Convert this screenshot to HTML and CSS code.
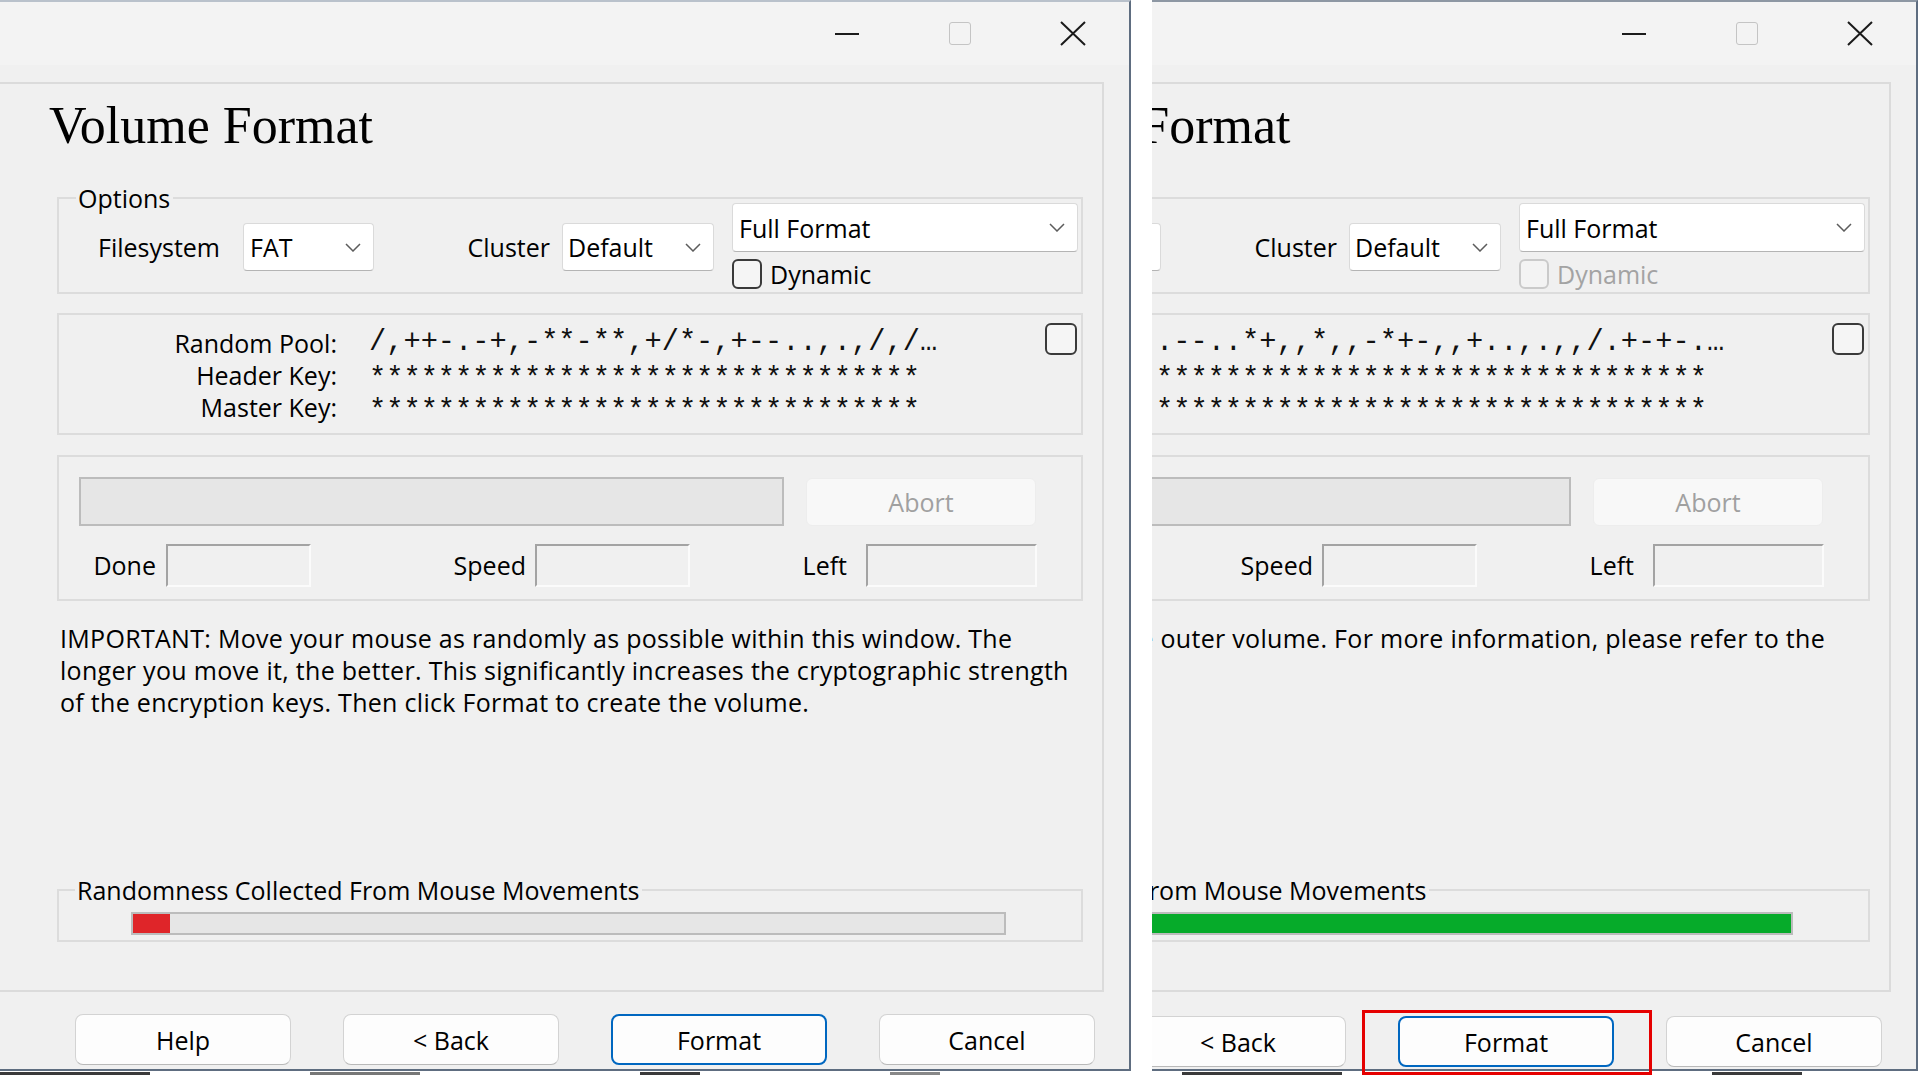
FILE: index.html
```html
<!DOCTYPE html>
<html lang="en">
<head>
<meta charset="utf-8">
<title>Volume Format</title>
<link rel="stylesheet" href="styles.css">
</head>
<body>
<div class="screen">
  <div class="viewport vp-left">
    <div class="window">
      <div class="titlebar">
        <div class="cap-btn"><span class="min-glyph"></span></div>
        <div class="cap-btn"><span class="max-glyph"></span></div>
        <div class="cap-btn"><svg class="close-glyph" width="26" height="25" viewBox="0 0 26 25"><path d="M1 1L25 24M25 1L1 24" stroke="#1a1a1a" stroke-width="2" fill="none"/></svg></div>
      </div>
      <div class="frame">
        <h1 class="page-title">Volume Format</h1>
        <fieldset class="group options">
          <legend>Options</legend>
          <div class="options-row">
            <span class="lbl lbl-fs">Filesystem</span>
            <div class="combo combo-fs"><span>FAT</span><svg class="chev" width="16" height="9" viewBox="0 0 16 9"><polyline points="1,1 8,8 15,1" fill="none" stroke="#5c5c5c" stroke-width="1.5"/></svg></div>
            <span class="lbl lbl-cluster">Cluster</span>
            <div class="combo combo-cluster"><span>Default</span><svg class="chev" width="16" height="9" viewBox="0 0 16 9"><polyline points="1,1 8,8 15,1" fill="none" stroke="#5c5c5c" stroke-width="1.5"/></svg></div>
            <div class="format-col">
              <div class="combo combo-format"><span>Full Format</span><svg class="chev" width="16" height="9" viewBox="0 0 16 9"><polyline points="1,1 8,8 15,1" fill="none" stroke="#5c5c5c" stroke-width="1.5"/></svg></div>
              <div class="check"><span class="check-box"></span><span>Dynamic</span></div>
            </div>
          </div>
        </fieldset>
        <div class="group keys">
          <div class="keys-grid">
            <span class="key-lbl">Random Pool:</span><span class="key-val">/,++-.-+,-**-**,+/*-,+--..,.,/,/…</span>
            <span class="key-lbl">Header Key:</span><span class="key-val key-stars">********************************</span>
            <span class="key-lbl">Master Key:</span><span class="key-val key-stars">********************************</span>
          </div>
          <span class="check-box keys-box"></span>
        </div>
        <div class="group progress">
          <div class="prog-row">
            <div class="prog-bar"></div>
            <div class="abort">Abort</div>
          </div>
          <div class="stats-row">
            <span class="stat-lbl lbl-done">Done</span><span class="stat-box box-done"></span>
            <span class="stat-lbl lbl-speed">Speed</span><span class="stat-box box-speed"></span>
            <span class="stat-lbl lbl-left">Left</span><span class="stat-box box-left"></span>
          </div>
        </div>
        <p class="help">IMPORTANT: Move your mouse as randomly as possible within this window. The<br>longer you move it, the better. This significantly increases the cryptographic strength<br>of the encryption keys. Then click Format to create the volume.</p>
        <fieldset class="group randomness">
          <legend>Randomness Collected From Mouse Movements</legend>
          <div class="rand-bar"><div class="rand-fill red" style="width:4.2%"></div></div>
        </fieldset>
      </div>
      <div class="buttons">
        <div class="btn">Help</div>
        <div class="btn">&lt; Back</div>
        <div class="btn btn-default">Format</div>
        <div class="btn">Cancel</div>
      </div>
    </div>
    <div class="desk">
      <span class="frag f1"></span><span class="frag f2"></span><span class="frag f3"></span><span class="frag f4"></span>
    </div>
  </div>

  <div class="viewport vp-gap"></div>

  <div class="viewport vp-right">
    <div class="window window-shift">
      <div class="titlebar">
        <div class="cap-btn"><span class="min-glyph"></span></div>
        <div class="cap-btn"><span class="max-glyph"></span></div>
        <div class="cap-btn"><svg class="close-glyph" width="26" height="25" viewBox="0 0 26 25"><path d="M1 1L25 24M25 1L1 24" stroke="#1a1a1a" stroke-width="2" fill="none"/></svg></div>
      </div>
      <div class="frame">
        <h1 class="page-title">Outer Volume Format</h1>
        <fieldset class="group options">
          <legend>Options</legend>
          <div class="options-row">
            <span class="lbl lbl-fs">Filesystem</span>
            <div class="combo combo-fs"><span>FAT</span><svg class="chev" width="16" height="9" viewBox="0 0 16 9"><polyline points="1,1 8,8 15,1" fill="none" stroke="#5c5c5c" stroke-width="1.5"/></svg></div>
            <span class="lbl lbl-cluster">Cluster</span>
            <div class="combo combo-cluster"><span>Default</span><svg class="chev" width="16" height="9" viewBox="0 0 16 9"><polyline points="1,1 8,8 15,1" fill="none" stroke="#5c5c5c" stroke-width="1.5"/></svg></div>
            <div class="format-col">
              <div class="combo combo-format"><span>Full Format</span><svg class="chev" width="16" height="9" viewBox="0 0 16 9"><polyline points="1,1 8,8 15,1" fill="none" stroke="#5c5c5c" stroke-width="1.5"/></svg></div>
              <div class="check check-disabled"><span class="check-box"></span><span>Dynamic</span></div>
            </div>
          </div>
        </fieldset>
        <div class="group keys">
          <div class="keys-grid">
            <span class="key-lbl">Random Pool:</span><span class="key-val">.--..*+,,*,,-*+-,,+..,.,,/.+-+-.…</span>
            <span class="key-lbl">Header Key:</span><span class="key-val key-stars">********************************</span>
            <span class="key-lbl">Master Key:</span><span class="key-val key-stars">********************************</span>
          </div>
          <span class="check-box keys-box"></span>
        </div>
        <div class="group progress">
          <div class="prog-row">
            <div class="prog-bar"></div>
            <div class="abort">Abort</div>
          </div>
          <div class="stats-row">
            <span class="stat-lbl lbl-done">Done</span><span class="stat-box box-done"></span>
            <span class="stat-lbl lbl-speed">Speed</span><span class="stat-box box-speed"></span>
            <span class="stat-lbl lbl-left">Left</span><span class="stat-box box-left"></span>
          </div>
        </div>
        <p class="help">Click Format to create the outer volume. For more information, please refer to the<br>documentation.</p>
        <fieldset class="group randomness">
          <legend>Randomness Collected From Mouse Movements</legend>
          <div class="rand-bar"><div class="rand-fill green" style="width:100%"></div></div>
        </fieldset>
      </div>
      <div class="buttons">
        <div class="btn">Help</div>
        <div class="btn">&lt; Back</div>
        <div class="btn btn-default btn-marked">Format</div>
        <div class="btn">Cancel</div>
      </div>
    </div>
    <div class="desk">
      <span class="frag f5"></span><span class="frag f6"></span><span class="frag f7"></span>
    </div>
  </div>
</div>
</body>
</html>
```

FILE: styles.css
```css
html, body {
  margin: 0;
  padding: 0;
}

body {
  width: 1920px;
  height: 1080px;
  overflow: hidden;
  background: #ffffff;
  font-family: "Open Sans", "Noto Sans", sans-serif;
  font-size: 25px;
  color: #000000;
}

.screen {
  display: flex;
  height: 1080px;
}

.viewport {
  flex: none;
  height: 1080px;
  overflow: hidden;
  display: flex;
  flex-direction: column;
}

.vp-left { width: 1131px; }
.vp-gap { width: 21px; background: #ffffff; }
.vp-right { width: 768px; }

.window {
  flex: none;
  box-sizing: border-box;
  width: 1131px;
  height: 1071px;
  background: #f0f0f0;
  border-top: 2px solid #b9c1cb;
  border-right: 2px solid #5e6d80;
  border-bottom: 2px solid #5e6d80;
  display: flex;
  flex-direction: column;
}

.window-shift {
  margin-left: -365px;
  border-top-color: #8d97a3;
}

/* title bar */
.titlebar {
  flex: none;
  height: 63px;
  background: #f3f3f3;
  display: flex;
  justify-content: flex-end;
}

.cap-btn {
  width: 113px;
  display: flex;
  align-items: center;
  justify-content: center;
}

.min-glyph {
  width: 24px;
  height: 2px;
  background: #1b1b1b;
}

.max-glyph {
  box-sizing: border-box;
  width: 22px;
  height: 23px;
  border: 1.5px solid #c4c4c4;
  border-radius: 3px;
}

/* content frame */
.frame {
  flex: none;
  box-sizing: border-box;
  width: 1104px;
  height: 910px;
  margin-top: 17px;
  padding-left: 57px;
  border-top: 2px solid #dbdbdb;
  border-right: 2px solid #dbdbdb;
  border-bottom: 2px solid #dbdbdb;
  display: flex;
  flex-direction: column;
}

.page-title {
  margin: 14px 0 0 -8px;
  font-family: "Liberation Serif", "Times New Roman", serif;
  font-weight: normal;
  font-size: 52px;
  line-height: 56px;
  white-space: nowrap;
}

.group {
  box-sizing: border-box;
  width: 1026px;
  min-width: 0;
  margin: 0;
  padding: 0;
  border: 2px solid #dcdcdc;
}

.group legend {
  padding: 0 3px 0 2px;
  line-height: 10px;
  white-space: nowrap;
}

/* options */
.options {
  margin-top: 39px;
  padding-bottom: 3px;
}

.options legend { margin-left: 17px; }

.options-row {
  display: flex;
  align-items: flex-start;
}

.lbl {
  box-sizing: border-box;
  margin-top: 20px;
  line-height: 48px;
  white-space: nowrap;
}

.lbl-fs {
  width: 145px;
  margin-left: 39px;
}

.lbl-cluster {
  width: 188px;
  text-align: right;
  padding-right: 12px;
}

.combo {
  box-sizing: border-box;
  display: flex;
  align-items: center;
  justify-content: space-between;
  background: #ffffff;
  border: 1px solid #dadada;
  border-bottom-color: #b4b4b4;
  border-radius: 4px;
  padding: 0 12px 0 6px;
  white-space: nowrap;
}

.combo-fs {
  width: 131px;
  height: 48px;
  margin-top: 20px;
}

.combo-cluster {
  width: 152px;
  height: 48px;
  margin-top: 20px;
  padding-left: 5px;
}

.format-col {
  width: 346px;
  margin-left: 18px;
}

.combo-format {
  width: 346px;
  height: 49px;
  padding-left: 6px;
}

.chev { flex: none; }

.check {
  display: flex;
  align-items: center;
  gap: 8px;
  height: 31px;
  margin-top: 6px;
  white-space: nowrap;
}

.check-box {
  flex: none;
  box-sizing: border-box;
  width: 30px;
  height: 30px;
  border: 2px solid #3a3a3a;
  border-radius: 6px;
  background: #f5f5f5;
}

.check-disabled { color: #a3a3a3; }
.check-disabled .check-box { border-color: #cacaca; background: #f3f3f3; }

/* keys */
.keys {
  margin-top: 19px;
  padding: 12px 4px 10px 0;
  display: flex;
  align-items: flex-start;
}

.keys-grid {
  display: grid;
  grid-template-columns: 278px auto;
  column-gap: 32px;
  line-height: 32px;
}

.key-lbl {
  text-align: right;
  white-space: nowrap;
}

.key-val {
  font-family: "Liberation Mono", "Courier New", monospace;
  font-size: 28.7px;
  line-height: 32px;
  white-space: nowrap;
  color: #111111;
}

.key-stars {
  transform: translateY(5px);
}

.keys-box {
  margin-left: auto;
  margin-top: -4px;
  width: 32px;
  height: 32px;
}

/* progress */
.progress {
  margin-top: 20px;
  padding: 20px 0 12px 20px;
}

.prog-row {
  display: flex;
  align-items: center;
}

.prog-bar {
  box-sizing: border-box;
  width: 705px;
  height: 49px;
  background: #e6e6e6;
  border: 2px solid #bcbcbc;
}

.abort {
  box-sizing: border-box;
  width: 230px;
  height: 48px;
  margin-left: 22px;
  display: flex;
  align-items: center;
  justify-content: center;
  background: #f8f8f8;
  border: 1px solid #ededed;
  border-radius: 6px;
  color: #a0a0a0;
}

.stats-row {
  display: flex;
  margin-top: 18px;
  height: 43px;
}

.stat-lbl {
  box-sizing: border-box;
  line-height: 43px;
  text-align: right;
  white-space: nowrap;
}

.lbl-done { width: 87px; padding-right: 10px; }
.lbl-speed { width: 224px; padding-right: 9px; }
.lbl-left { width: 176px; padding-right: 19px; }

.stat-box {
  box-sizing: border-box;
  height: 43px;
  border-top: 2px solid #a3a3a3;
  border-left: 2px solid #a3a3a3;
  border-right: 2px solid #fbfbfb;
  border-bottom: 2px solid #fbfbfb;
  background: #f0f0f0;
}

.box-done { width: 145px; }
.box-speed { width: 155px; }
.box-left { width: 171px; }

/* help text */
.help {
  margin: 21px 0 0 3px;
  line-height: 32px;
  letter-spacing: 0.3px;
  white-space: nowrap;
}

/* randomness */
.randomness {
  margin-top: auto;
  margin-bottom: 48px;
}

.randomness legend { margin-left: 16px; }

.rand-bar {
  box-sizing: border-box;
  width: 875px;
  height: 23px;
  margin: 17px 0 5px 72px;
  background: #e6e6e6;
  border: 2px solid #bcbcbc;
  display: flex;
}

.rand-fill { height: 100%; }
.rand-fill.red { background: #df2529; }
.rand-fill.green { background: #06ab2a; }

/* dialog buttons */
.buttons {
  flex: none;
  display: flex;
  gap: 52px;
  margin-top: 22px;
  padding-left: 75px;
}

.btn {
  box-sizing: border-box;
  width: 216px;
  height: 51px;
  display: flex;
  align-items: center;
  justify-content: center;
  background: #fdfdfd;
  border: 1px solid #d3d3d3;
  border-bottom-color: #b9b9b9;
  border-radius: 8px;
  white-space: nowrap;
}

.btn-default {
  border: 2px solid #0067c0;
}

.window-shift .buttons {
  margin-top: 24px;
}

.btn-marked {
  position: relative;
}

.btn-marked::after {
  content: "";
  position: absolute;
  left: -38px;
  right: -40px;
  top: -8px;
  bottom: -10px;
  border: 3px solid #e50000;
}

/* desktop strip peeking below the windows */
.desk {
  flex: none;
  height: 9px;
  display: flex;
  align-items: flex-start;
  padding-top: 1px;
  background: #ffffff;
}

.frag {
  height: 3px;
  background: #3a3a3a;
  margin-right: 40px;
}

.f1 { width: 150px; margin-left: 0; }
.f2 { width: 110px; margin-left: 120px; background: #777777; }
.f3 { width: 60px; margin-left: 180px; }
.f4 { width: 50px; margin-left: 150px; background: #888888; }
.f5 { width: 160px; margin-left: 30px; }
.f6 { width: 60px; margin-left: 70px; background: #888888; }
.f7 { width: 90px; margin-left: 160px; }
```
